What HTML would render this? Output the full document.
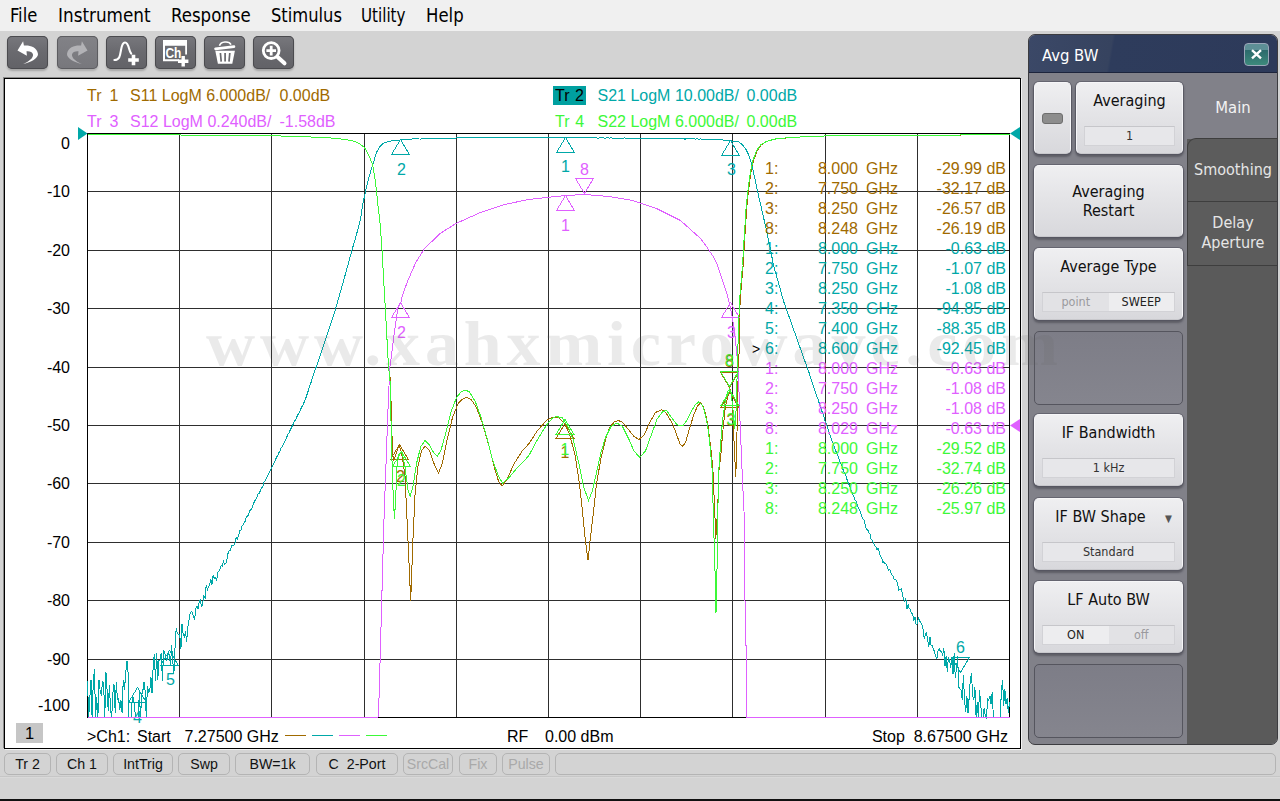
<!DOCTYPE html><html><head><meta charset="utf-8"><title>Network Analyzer</title><style>
*{box-sizing:border-box;margin:0;padding:0}
html,body{width:1280px;height:801px;overflow:hidden}
body{position:relative;background:#d3d3d3;font-family:"Liberation Sans",sans-serif;color:#000}
.abs{position:absolute}
#menubar{left:0;top:0;width:1280px;height:31px;background:#f0f0f0}
#menubar span{position:absolute;top:4px;font-size:19px;line-height:22px;transform-origin:0 0;font-family:"DejaVu Sans Condensed","Liberation Sans",sans-serif;white-space:nowrap}
.tb{position:absolute;top:36px;width:41px;height:33px;border-radius:5px;background:linear-gradient(#78787d,#69696e 50%,#626267);box-shadow:inset 0 0 0 1px #4b4b4f,0 2px 2px rgba(0,0,0,.22)}
.tb.dis{background:linear-gradient(#828287,#77777c);box-shadow:inset 0 0 0 1px #5c5c60,0 2px 2px rgba(0,0,0,.18)}
.tb svg{position:absolute;left:0;top:0}
#plot{left:4px;top:78px;width:1017px;height:671px;background:#fff;border:1px solid #000;box-shadow:-1px -1px 0 #8a8a8a,1px 1px 0 #f4f4f4}
.pt{position:absolute;font-size:16px;line-height:20px;white-space:pre}
.c1{color:#a06a00}.c2{color:#00a8a8}.c3{color:#df60ff}.c4{color:#3cf838}
.yl{position:absolute;left:20px;width:50px;text-align:right;font-size:16px;line-height:20px}
#mk{position:absolute;left:0;top:0}
.mr{position:absolute;height:20px;font-size:16px;line-height:20px;white-space:pre}
#wm{left:206px;top:303.7px;font-family:"Liberation Serif",serif;font-weight:bold;font-size:63px;line-height:80px;letter-spacing:4.5px;color:rgba(100,100,100,.135);white-space:nowrap;pointer-events:none;transform:scaleX(1.08);transform-origin:0 0}
/* side panel */
#panel{left:1028px;top:34px;width:250px;height:711px;border-radius:7px;background:#818189;border:1px solid #3c3c40;overflow:hidden}
#ptitle{left:0;top:0;width:248px;height:38px;background:linear-gradient(100deg,#3b4867 0%,#36435f 33%,#2e3c5c 34%,#2d3a5a 100%);border-bottom:1px solid #1c243c;border-radius:6px 6px 0 0;color:#fff;font-family:"DejaVu Sans Condensed","Liberation Sans",sans-serif;font-size:16.5px;line-height:41px;padding-left:13px}
#pclose{left:215px;top:8px;width:25px;height:23px;border-radius:4px;border:1px solid #9aa6b8;background:linear-gradient(#5d8f96 0%,#5d8f96 28%,#2c6a6c 30%,#3d8a7c 100%)}
#tabs{left:158px;top:38px;width:92px;height:673px;background:#5a5a5a}
.tab{position:absolute;left:0;width:92px;color:#e6e6e6;font-family:"DejaVu Sans Condensed","Liberation Sans",sans-serif;font-size:16px;line-height:20px;text-align:center}
.kb{position:absolute;left:5px;width:149px;height:72px;border-radius:5px;background:linear-gradient(#efeff1,#e4e4e7 45%,#d8d8dc);border:1px solid #f6f6f8;border-bottom-color:#c8c8cc;box-shadow:0 0 0 1px rgba(80,80,92,.55),0 2px 2px 1px rgba(40,40,50,.4);font-family:"DejaVu Sans Condensed","Liberation Sans",sans-serif;font-size:16px;line-height:19px;text-align:center;color:#111}
.kb .t{position:absolute;left:0;width:100%;top:8px}
.kb .v{position:absolute;left:7px;right:7px;top:43px;height:20px;border:1px solid #d2d2d6;border-top-color:#c6c6ca;background:#e7e7ea;font-size:12.5px;line-height:18px;color:#333}
.kb .v i{font-style:normal;position:absolute;top:0;width:50%;text-align:center}
.kb .v .on{background:#ededef;color:#222}
.kb .v .off{color:#9a9a9e;background:#e2e2e5}
.ke{position:absolute;left:5px;width:149px;height:74px;border-radius:5px;border:1px solid #55555e;background:linear-gradient(#7d7d87,#85858e)}
/* status bar */
.sb{position:absolute;top:753px;height:22px;border:1px solid #b4b4b4;border-radius:5px;background:#d3d3d3;font-size:14.2px;line-height:20px;text-align:center;color:#111;white-space:pre}
.sb.dis{color:#a9a9a9}
#sline{left:0;top:776px;width:1280px;height:2px;background:linear-gradient(#bdbdbd,#e2e2e2)}
#bline{left:0;top:799px;width:1280px;height:2px;background:#111}
</style></head><body>
<div id="menubar" class="abs">
<span style="left:9.6px;transform:scaleX(0.96)">File</span>
<span style="left:58.3px;transform:scaleX(0.985)">Instrument</span>
<span style="left:170.5px;transform:scaleX(0.972)">Response</span>
<span style="left:270.5px;transform:scaleX(0.955)">Stimulus</span>
<span style="left:361px;transform:scaleX(0.885)">Utility</span>
<span style="left:426.3px;transform:scaleX(0.965)">Help</span>
</div>
<div class="tb" style="left:7px"><svg width="41" height="33" viewBox="0 0 41 33"><path d="M10.5 14.6L16.1 5.2L16.9 9.6C22 9 30 10.5 31 18C31.3 22 24 26.5 16.2 27.9C22 25.5 26.5 22 26 18.5C25.5 15.5 22 15 19.5 15.3L19.9 19.8Z" fill="#fff"/></svg></div>
<div class="tb dis" style="left:57px"><svg width="41" height="33" viewBox="0 0 41 33"><path d="M30.5 14.6L24.9 5.2L24.1 9.6C19 9 11 10.5 10 18C9.7 22 17 26.5 24.8 27.9C19 25.5 14.5 22 15 18.5C15.5 15.5 19 15 21.5 15.3L21.1 19.8Z" fill="#b2b2b6"/></svg></div>
<div class="tb" style="left:106px"><svg width="41" height="33" viewBox="0 0 41 33"><path d="M8.4 24C13.5 24 14 20 15 14C16 8 17.3 6.5 19 6.5C21.3 6.5 22.3 9.5 23.2 13C23.8 15.3 24.5 16.8 25.2 17.7" fill="none" stroke="#fff" stroke-width="2.1" stroke-linecap="round"/><path d="M22.2 24h10.6M27.5 18.7v10.6" stroke="#fff" stroke-width="3.6"/></svg></div>
<div class="tb" style="left:155px"><svg width="41" height="33" viewBox="0 0 41 33"><path d="M8 4h24v14.5h-1.8v-8.8h-20.2v13.6h14v2h-16z" fill="#fff"/><text x="10.4" y="22" font-family="Liberation Sans,sans-serif" font-weight="bold" font-size="14" fill="#fff" textLength="16" lengthAdjust="spacingAndGlyphs">Ch</text><path d="M23 25.2h10.4M28.2 20v10.4" stroke="#fff" stroke-width="3.4"/></svg></div>
<div class="tb" style="left:204px"><svg width="41" height="33" viewBox="0 0 41 33"><path d="M15.5 9.8C16.5 5.4 25 4.6 27 8.6" fill="none" stroke="#fff" stroke-width="1.6"/><path d="M11.5 12.9L30 10.6" stroke="#fff" stroke-width="2.6" stroke-linecap="round"/><path d="M11.3 14.8h19.6l-2.6 13h-14.4z" fill="#fff"/><path d="M16.4 17l.8 8.6M21.1 17v8.6M25.8 17l-.8 8.6" stroke="#68686d" stroke-width="1.7"/></svg></div>
<div class="tb" style="left:253px"><svg width="41" height="33" viewBox="0 0 41 33"><circle cx="18.2" cy="14.6" r="7.9" fill="none" stroke="#fff" stroke-width="2.8"/><path d="M13.4 14.6h9.6M18.2 9.8v9.6" stroke="#fff" stroke-width="2.8"/><path d="M24.6 21L31.5 27.3" stroke="#fff" stroke-width="4" stroke-linecap="round"/></svg></div>
<div id="plot" class="abs"></div>
<span class="pt c1" style="left:87px;top:86px">Tr</span><span class="pt c1" style="left:109.5px;top:86px">1</span><span class="pt c1" style="left:130px;top:86px">S11 LogM 6.000dB/</span><span class="pt c1" style="left:279.5px;top:86px">0.00dB</span>
<span class="pt c3" style="left:87px;top:112px">Tr</span><span class="pt c3" style="left:109.5px;top:112px">3</span><span class="pt c3" style="left:130px;top:112px">S12 LogM 0.240dB/</span><span class="pt c3" style="left:279.5px;top:112px">-1.58dB</span>
<div class="abs" style="left:553px;top:86px;width:33px;height:19px;background:#00a0a0"></div>
<span class="pt" style="left:555px;top:86px;color:#000">Tr</span><span class="pt" style="left:575px;top:86px;color:#000">2</span>
<span class="pt c2" style="left:597.5px;top:86px">S21 LogM 10.00dB/</span><span class="pt c2" style="left:746.5px;top:86px">0.00dB</span>
<span class="pt c4" style="left:555px;top:112px">Tr</span><span class="pt c4" style="left:575.3px;top:112px">4</span><span class="pt c4" style="left:597.5px;top:112px">S22 LogM 6.000dB/</span><span class="pt c4" style="left:746.5px;top:112px">0.00dB</span>
<div class="yl" style="top:134px">0</div>
<div class="yl" style="top:182px">-10</div>
<div class="yl" style="top:241px">-20</div>
<div class="yl" style="top:299px">-30</div>
<div class="yl" style="top:358px">-40</div>
<div class="yl" style="top:416px">-50</div>
<div class="yl" style="top:474px">-60</div>
<div class="yl" style="top:533px">-70</div>
<div class="yl" style="top:591px">-80</div>
<div class="yl" style="top:650px">-90</div>
<div class="yl" style="top:696px">-100</div>
<svg class="abs" style="left:0;top:0" width="1280" height="801" viewBox="0 0 1280 801">
<path d="M87.5 133V718M87 133.5H1010M179.5 133V718M87 191.5H1010M271.5 133V718M87 250.5H1010M364.5 133V718M87 308.5H1010M456.5 133V718M87 367.5H1010M548.5 133V718M87 425.5H1010M640.5 133V718M87 483.5H1010M732.5 133V718M87 542.5H1010M825.5 133V718M87 600.5H1010M917.5 133V718M87 659.5H1010M1009.5 133V718M87 717.5H1010" stroke="#2e2e2e" stroke-width="1" fill="none" shape-rendering="crispEdges"/>
<rect x="87.5" y="133.5" width="922" height="584" fill="none" stroke="#000" shape-rendering="crispEdges"/>
<g shape-rendering="crispEdges" font-family="Liberation Sans,sans-serif" font-size="16" text-anchor="middle">
<polyline points="87.5,134.5 180.5,134.5 181.5,135.5 260.5,135.5 300.5,136.5 330.5,138.0 345.5,139.5 355.5,141.5 360.5,144.5 364.5,147.5 368.5,154.5 372.5,164.5 374.5,175.5 376.5,190.5 378.0,205.5 380.0,222.5 382.0,249.5 385.3,308.5 388.5,366.5 390.5,380.5 391.5,420.5 392.5,450.5 393.5,461.0 395.5,455.5 399.2,445.1 401.5,452.5 405.0,475.5 407.9,538.5 410.7,600.5 413.0,538.5 415.0,495.5 417.9,466.5 421.5,450.9 425.1,446.0 429.5,450.5 433.5,462.5 438.5,473.0 442.3,463.5 446.5,442.3 452.5,417.5 458.1,403.5 462.5,399.2 466.5,397.5 471.1,399.5 476.5,407.5 482.5,423.5 488.3,443.5 494.1,466.5 498.5,481.1 502.1,486.0 507.0,479.5 514.2,463.5 522.5,450.5 529.1,443.5 537.5,430.5 546.5,420.5 552.1,417.3 557.9,417.3 563.5,422.2 569.4,433.5 575.1,455.2 579.5,483.9 582.3,509.5 585.2,538.5 588.0,560.1 590.3,538.5 593.8,509.5 596.5,483.9 601.0,458.1 605.3,440.5 609.5,427.9 613.9,422.2 618.2,420.5 622.5,422.2 628.3,429.4 634.0,436.5 638.9,439.5 644.1,435.1 649.8,422.2 655.5,412.5 661.3,409.8 664.0,410.5 667.5,415.2 672.7,423.9 677.1,436.2 680.5,444.9 682.9,446.3 685.8,441.5 689.3,429.2 693.7,415.2 697.2,406.5 700.4,402.9 703.3,406.5 706.3,416.9 708.5,429.2 711.2,451.9 712.9,469.5 714.5,505.5 715.8,538.5 717.8,505.5 719.0,470.5 720.8,455.5 722.5,434.5 725.2,408.2 727.8,396.0 730.5,389.8 732.2,402.5 733.9,437.9 735.7,476.5 736.7,451.5 737.5,402.5 738.3,368.0 739.2,350.5 740.1,300.5 743.1,265.5 744.8,237.5 746.6,209.5 748.3,191.9 750.9,172.5 753.5,160.5 757.1,150.8 761.4,144.7 767.5,141.2 776.1,139.0 792.1,137.4 814.7,136.3 841.1,135.5 960.1,135.5 961.1,134.5 1010.1,134.5" fill="none" stroke="#a06a00" stroke-width="1"/>
<path d="M565.0 423.5L574.0 438.5H556.0Z" fill="none" stroke="#a06a00"/><text x="565.0" y="458.0" fill="#a06a00">1</text>
<path d="M399.5 444.5L408.5 459.5H390.5Z" fill="none" stroke="#a06a00"/><text x="400.5" y="482.0" fill="#a06a00">2</text>
<path d="M730.0 392.5L739.0 407.5H721.0Z" fill="none" stroke="#a06a00"/><text x="731.0" y="426.0" fill="#a06a00">3</text>
<path d="M729.5 387.5L738.5 372.5H720.5Z" fill="none" stroke="#a06a00"/><text x="729.5" y="367.0" fill="#a06a00">8</text>
<polyline points="87.5,680.8 88.7,717.5 89.8,698.1 91.0,679.7 92.1,717.5 93.3,681.8 94.4,669.0 95.6,717.5 96.7,697.3 97.9,717.5 99.0,680.3 100.2,691.2 101.3,695.5 102.5,681.5 103.6,683.4 104.8,717.5 105.9,671.8 107.1,690.0 108.2,710.8 109.4,685.0 110.5,708.8 111.7,717.5 112.9,692.5 114.0,684.4 115.2,712.7 116.3,682.5 117.5,699.4 118.6,698.5 119.8,710.1 120.9,700.1 122.1,713.2 123.2,680.4 124.4,689.6 125.5,677.0 126.7,661.7 127.8,661.9 129.0,717.5 130.1,717.5 131.3,717.5 132.4,696.1 133.6,697.5 134.8,710.8 135.9,717.5 137.1,717.5 138.2,717.5 139.4,692.5 140.5,717.5 141.7,694.9 142.8,691.1 144.0,682.1 145.1,690.4 146.3,717.5 147.4,685.8 148.6,692.1 149.7,691.7 150.9,676.7 152.0,693.2 153.2,666.2 154.3,654.4 155.5,680.5 156.7,653.2 157.8,679.6 159.0,660.1 160.1,660.0 161.3,652.8 162.4,681.2 163.6,649.9 164.7,652.6 165.9,658.2 167.0,660.6 168.2,653.7 169.3,654.2 170.5,665.8 171.6,644.9 172.8,661.9 173.9,673.6 175.1,646.2 176.2,628.2 177.4,633.7 178.5,634.6 179.7,634.3 180.9,649.1 182.0,623.8 183.2,634.6 184.3,636.9 185.5,631.4 186.6,642.2 187.8,627.9 188.9,620.6 190.1,613.8 191.2,611.7 192.4,612.4 193.5,617.0 194.7,618.9 195.8,608.0 197.0,606.2 198.1,609.2 199.3,600.9 200.4,599.6 201.6,607.4 202.8,602.1 203.9,596.1 205.1,597.8 206.2,585.0 207.4,590.0 208.5,586.7 209.7,584.3 210.8,578.8 212.0,584.6 213.1,575.6 214.3,578.3 215.4,577.3 216.6,580.8 217.7,572.7 218.9,571.1 220.0,569.3 221.2,565.5 222.3,566.2 223.5,561.4 224.6,564.6 225.8,563.4 227.0,559.2 228.1,553.0 229.3,550.6 230.4,550.6 231.6,546.0 232.7,545.6 233.9,545.1 235.0,542.8 236.2,537.3 237.3,539.1 238.5,536.1 239.6,530.7 240.8,530.4 241.9,526.4 243.1,525.1 244.2,522.7 245.4,520.9 246.5,516.3 247.7,516.2 248.8,513.6 250.0,510.4 251.2,509.5 252.3,507.6 253.5,503.7 254.6,501.1 255.8,499.4 256.9,497.7 258.1,493.8 259.2,493.9 260.4,490.4 261.5,487.4 262.7,487.1 263.8,482.4 265.0,481.4 266.1,478.9 267.3,476.7 268.4,474.1 269.6,471.5 270.7,469.4 271.9,467.3 273.1,464.6 274.2,462.5 275.4,460.0 276.5,457.4 277.7,455.5 278.8,452.9 280.0,450.8 281.1,448.1 282.3,446.4 283.4,443.8 284.6,441.7 285.7,439.5 286.9,436.8 288.0,434.3 289.2,432.6 290.3,429.8 291.5,427.6 292.6,425.3 293.8,422.8 294.9,420.7 296.1,418.5 297.3,415.9 298.4,413.9 299.6,411.7 300.7,409.0 301.9,406.8 303.0,404.7 304.2,402.2 305.3,399.4 306.5,396.1 307.6,392.9 308.8,389.1 309.9,385.6 311.1,382.2 312.2,378.6 313.4,375.3 314.5,371.7 315.7,368.4 316.8,365.3 318.0,361.8 319.2,358.3 320.3,354.8 321.5,351.2 322.6,348.1 323.8,344.4 324.9,341.1 326.1,337.5 327.2,334.1 328.4,330.6 329.5,327.4 330.7,323.8 331.8,320.3 333.0,317.0 334.1,313.5 335.3,309.8 336.4,306.1 337.6,302.0 338.7,297.9 339.9,293.7 341.1,289.8 342.2,285.5 343.4,281.4 344.5,277.3 345.7,273.0 346.8,268.8 348.0,264.6 349.1,260.7 350.3,256.3 351.4,252.3 352.6,248.1 353.7,244.0 354.9,240.1 356.0,235.8 357.2,231.9 358.3,227.5 359.5,223.3 360.6,218.3 361.8,210.4 362.9,203.3 364.1,198.1 365.3,192.7 366.4,187.6 367.6,182.6 368.7,177.7 369.9,174.2 371.0,170.4 372.2,166.6 373.3,162.9 374.5,159.1 375.6,155.4 376.8,151.9 377.9,150.1 379.1,147.9 380.2,146.2 381.4,144.9 382.5,144.0 383.7,143.0 384.8,142.5 386.0,142.3 387.1,141.8 388.3,141.5 389.5,141.1 390.6,141.1 391.8,140.8 392.9,140.5 394.1,140.8 395.2,140.4 396.4,140.4 397.5,140.3 398.7,140.1 399.8,140.1 401.0,139.8 402.1,139.7 403.3,139.8 404.4,139.6 405.6,139.7 406.7,139.5 407.9,139.3 409.0,139.3 410.2,139.1 411.4,139.1 412.5,138.9 413.7,138.8 414.8,138.8 416.0,139.0 417.1,138.9 418.3,138.8 419.4,139.0 420.6,139.1 421.7,138.8 422.9,138.7 424.0,138.8 425.2,138.8 426.3,138.8 427.5,138.7 428.6,139.0 429.8,138.7 430.9,138.7 432.1,138.9 433.2,138.8 434.4,138.6 435.6,138.6 436.7,138.6 437.9,138.7 439.0,138.9 440.2,138.7 441.3,138.5 442.5,138.7 443.6,138.4 444.8,138.4 445.9,138.6 447.1,138.4 448.2,138.7 449.4,138.6 450.5,138.5 451.7,138.3 452.8,138.0 454.0,138.2 455.1,138.0 456.3,138.0 457.5,137.8 458.6,137.8 459.8,137.6 460.9,137.5 462.1,137.5 463.2,137.3 464.4,137.4 465.5,137.6 466.7,137.6 467.8,137.5 469.0,137.6 470.1,137.5 471.3,137.7 472.4,137.6 473.6,137.4 474.7,137.7 475.9,137.6 477.0,137.7 478.2,137.7 479.4,137.6 480.5,137.6 481.7,137.5 482.8,137.6 484.0,137.6 485.1,137.4 486.3,137.4 487.4,137.6 488.6,137.7 489.7,137.3 490.9,137.4 492.0,137.6 493.2,137.4 494.3,137.6 495.5,137.5 496.6,137.5 497.8,137.6 498.9,137.6 500.1,137.3 501.2,137.4 502.4,137.3 503.6,137.4 504.7,137.5 505.9,137.7 507.0,137.5 508.2,137.5 509.3,137.7 510.5,137.2 511.6,137.5 512.8,137.5 513.9,137.3 515.1,137.7 516.2,137.5 517.4,137.5 518.5,137.3 519.7,137.4 520.8,137.5 522.0,137.7 523.1,137.6 524.3,137.5 525.5,137.5 526.6,137.4 527.8,137.4 528.9,137.3 530.1,137.5 531.2,137.6 532.4,137.7 533.5,137.3 534.7,137.6 535.8,137.4 537.0,137.5 538.1,137.3 539.3,137.5 540.4,137.6 541.6,137.5 542.7,137.5 543.9,137.7 545.0,137.5 546.2,137.7 547.3,137.3 548.5,137.5 549.7,137.6 550.8,137.6 552.0,137.5 553.1,137.3 554.3,137.4 555.4,137.5 556.6,137.7 557.7,137.4 558.9,137.5 560.0,137.4 561.2,137.6 562.3,137.3 563.5,137.3 564.6,137.6 565.8,137.4 566.9,137.7 568.1,137.4 569.2,137.5 570.4,137.4 571.5,137.5 572.7,137.5 573.9,137.7 575.0,137.8 576.2,137.7 577.3,137.5 578.5,137.6 579.6,137.8 580.8,137.6 581.9,137.7 583.1,137.7 584.2,137.8 585.4,137.7 586.5,137.6 587.7,137.6 588.8,137.7 590.0,137.9 591.1,137.7 592.3,137.6 593.4,137.8 594.6,138.0 595.8,137.9 596.9,138.0 598.1,138.0 599.2,138.0 600.4,137.9 601.5,137.8 602.7,137.9 603.8,138.0 605.0,138.1 606.1,138.0 607.3,137.9 608.4,137.9 609.6,138.1 610.7,137.8 611.9,138.0 613.0,138.1 614.2,138.3 615.3,138.0 616.5,138.1 617.6,138.2 618.8,138.1 620.0,138.3 621.1,138.0 622.3,138.2 623.4,138.3 624.6,137.9 625.7,138.1 626.9,138.0 628.0,138.2 629.2,138.0 630.3,138.3 631.5,138.3 632.6,138.2 633.8,138.3 634.9,138.1 636.1,138.3 637.2,138.5 638.4,138.3 639.5,138.2 640.7,138.4 641.9,138.3 643.0,138.4 644.2,138.6 645.3,138.3 646.5,138.3 647.6,138.3 648.8,138.3 649.9,138.5 651.1,138.4 652.2,138.5 653.4,138.2 654.5,138.4 655.7,138.6 656.8,138.3 658.0,138.6 659.1,138.7 660.3,138.5 661.4,138.5 662.6,138.6 663.8,138.6 664.9,138.6 666.1,138.8 667.2,138.6 668.4,138.7 669.5,138.6 670.7,138.6 671.8,138.7 673.0,138.7 674.1,138.7 675.3,138.5 676.4,138.8 677.6,138.8 678.7,138.8 679.9,138.7 681.0,138.9 682.2,138.9 683.3,138.6 684.5,139.0 685.6,139.0 686.8,138.7 688.0,138.9 689.1,139.0 690.3,138.7 691.4,139.0 692.6,138.9 693.7,138.9 694.9,139.0 696.0,139.0 697.2,138.9 698.3,139.1 699.5,139.2 700.6,138.9 701.8,139.1 702.9,139.1 704.1,139.0 705.2,139.2 706.4,139.3 707.5,139.4 708.7,139.2 709.9,139.1 711.0,139.3 712.2,139.3 713.3,139.4 714.5,139.4 715.6,139.1 716.8,139.2 717.9,139.4 719.1,139.4 720.2,139.7 721.4,139.5 722.5,139.7 723.7,140.1 724.8,140.2 726.0,140.3 727.1,140.3 728.3,140.5 729.4,140.8 730.6,140.9 731.7,141.0 732.9,141.1 734.1,141.4 735.2,141.3 736.4,141.2 737.5,141.3 738.7,141.7 739.8,142.9 741.0,143.4 742.1,144.5 743.3,145.9 744.4,147.3 745.6,148.6 746.7,150.9 747.9,153.2 749.0,156.0 750.2,159.1 751.3,162.9 752.5,167.5 753.6,173.1 754.8,178.3 756.0,183.9 757.1,189.3 758.3,194.4 759.4,199.3 760.6,204.5 761.7,209.5 762.9,214.5 764.0,219.4 765.2,224.4 766.3,229.7 767.5,234.9 768.6,240.6 769.8,246.1 770.9,251.8 772.1,258.0 773.2,264.1 774.4,268.4 775.5,272.5 776.7,276.5 777.8,280.7 779.0,285.0 780.2,289.0 781.3,293.0 782.5,297.6 783.6,301.4 784.8,304.8 785.9,307.7 787.1,311.3 788.2,314.3 789.4,317.6 790.5,320.9 791.7,323.8 792.8,327.5 794.0,330.6 795.1,333.6 796.3,336.8 797.4,340.4 798.6,343.6 799.7,346.8 800.9,349.8 802.0,353.3 803.2,356.3 804.4,359.7 805.5,362.8 806.7,366.2 807.8,369.5 809.0,372.4 810.1,376.3 811.3,379.6 812.4,383.2 813.6,386.6 814.7,390.5 815.9,393.3 817.0,396.6 818.2,399.7 819.3,403.4 820.5,406.5 821.6,410.4 822.8,413.5 823.9,416.8 825.1,421.3 826.3,423.6 827.4,427.9 828.6,430.6 829.7,434.6 830.9,437.2 832.0,441.0 833.2,443.5 834.3,446.8 835.5,450.2 836.6,452.9 837.8,455.4 838.9,458.9 840.1,462.1 841.2,464.6 842.4,467.1 843.5,471.5 844.7,473.3 845.8,475.6 847.0,479.4 848.1,482.2 849.3,485.2 850.5,488.8 851.6,491.2 852.8,494.8 853.9,496.9 855.1,500.6 856.2,501.3 857.4,505.9 858.5,508.4 859.7,510.3 860.8,513.6 862.0,517.2 863.1,519.4 864.3,520.5 865.4,525.8 866.6,529.4 867.7,529.7 868.9,532.9 870.0,533.6 871.2,539.8 872.4,540.1 873.5,543.2 874.7,545.8 875.8,546.2 877.0,549.8 878.1,548.0 879.3,552.2 880.4,556.6 881.6,557.2 882.7,562.5 883.9,561.6 885.0,563.4 886.2,564.3 887.3,566.5 888.5,570.6 889.6,569.5 890.8,572.1 891.9,575.1 893.1,576.0 894.2,579.3 895.4,579.3 896.6,580.3 897.7,585.0 898.9,590.1 900.0,589.5 901.2,589.0 902.3,593.4 903.5,599.4 904.6,600.8 905.8,597.7 906.9,609.0 908.1,604.8 909.2,608.6 910.4,609.5 911.5,613.9 912.7,613.6 913.8,621.0 915.0,616.8 916.1,624.3 917.3,623.9 918.5,616.8 919.6,620.9 920.8,622.9 921.9,624.8 923.1,629.7 924.2,639.0 925.4,634.1 926.5,632.8 927.7,639.6 928.8,647.4 930.0,636.9 931.1,645.8 932.3,645.2 933.4,649.2 934.6,651.9 935.7,656.8 936.9,658.4 938.0,651.4 939.2,649.0 940.4,651.3 941.5,651.7 942.7,655.6 943.8,648.0 945.0,665.7 946.1,656.2 947.3,671.7 948.4,657.2 949.6,660.3 950.7,668.0 951.9,656.8 953.0,674.3 954.2,653.0 955.3,678.4 956.5,668.0 957.6,656.5 958.8,687.1 959.9,689.0 961.1,690.3 962.2,700.1 963.4,675.0 964.6,701.4 965.7,711.9 966.9,695.7 968.0,713.4 969.2,697.1 970.3,679.7 971.5,673.4 972.6,695.2 973.8,700.0 974.9,687.3 976.1,716.6 977.2,702.2 978.4,717.5 979.5,690.5 980.7,704.4 981.8,717.5 983.0,717.5 984.1,708.5 985.3,715.2 986.5,717.5 987.6,698.6 988.8,700.1 989.9,695.8 991.1,704.3 992.2,692.3 993.4,717.5 994.5,717.5 995.7,717.5 996.8,717.5 998.0,717.4 999.1,717.5 1000.3,717.5 1001.4,689.7 1002.6,679.9 1003.7,705.5 1004.9,689.4 1006.0,704.2 1007.2,698.5 1008.3,713.0 1009.5,702.1" fill="none" stroke="#00a8a8" stroke-width="1"/>
<path d="M565.5 137.5L574.5 152.5H556.5Z" fill="none" stroke="#00a8a8"/><text x="565.5" y="172.0" fill="#00a8a8">1</text>
<path d="M400.5 139.5L409.5 154.5H391.5Z" fill="none" stroke="#00a8a8"/><text x="401.5" y="175.0" fill="#00a8a8">2</text>
<path d="M730.5 140.5L739.5 155.5H721.5Z" fill="none" stroke="#00a8a8"/><text x="731.5" y="175.0" fill="#00a8a8">3</text>
<path d="M137.5 687.5L146.5 702.5H128.5Z" fill="none" stroke="#00a8a8"/><text x="137.5" y="722.5" fill="#00a8a8">4</text>
<path d="M169.5 650.5L178.5 665.5H160.5Z" fill="none" stroke="#00a8a8"/><text x="170.5" y="685.0" fill="#00a8a8">5</text>
<path d="M960.5 672.5L969.5 657.5H951.5Z" fill="none" stroke="#00a8a8"/><text x="960.5" y="653.0" fill="#00a8a8">6</text>
<polyline points="87.5,717.5 377.5,717.5 378.5,716.5 381.0,627.5 383.8,525.5 386.5,450.5 388.5,395.5 390.0,366.5 393.3,340.5 397.8,308.5 401.0,302.5 402.3,295.5 407.9,280.5 415.8,262.5 424.5,248.5 440.5,233.2 456.5,223.2 480.5,212.5 504.5,204.5 528.5,199.5 552.5,196.8 566.5,195.5 584.5,194.5 608.5,196.5 632.5,200.5 656.5,208.5 680.5,220.5 700.5,238.5 707.5,247.9 714.5,258.5 717.5,265.5 722.5,280.5 726.5,292.5 729.5,303.5 732.5,318.5 735.0,335.5 737.0,355.5 738.3,371.5 740.0,420.5 741.8,464.1 743.0,490.5 744.0,510.5 744.5,570.5 745.0,600.5 746.1,649.5 747.0,717.5 1009.5,717.5" fill="none" stroke="#df60ff" stroke-width="1"/>
<path d="M565.5 195.5L574.5 210.5H556.5Z" fill="none" stroke="#df60ff"/><text x="565.5" y="231.0" fill="#df60ff">1</text>
<path d="M400.5 302.5L409.5 317.5H391.5Z" fill="none" stroke="#df60ff"/><text x="401.5" y="338.0" fill="#df60ff">2</text>
<path d="M730.5 302.5L739.5 317.5H721.5Z" fill="none" stroke="#df60ff"/><text x="731.5" y="338.0" fill="#df60ff">3</text>
<path d="M584.5 193.5L593.5 178.5H575.5Z" fill="none" stroke="#df60ff"/><text x="584.5" y="175.0" fill="#df60ff">8</text>
<polyline points="87.5,134.5 180.5,134.5 181.5,135.5 260.5,135.5 300.5,136.5 330.5,138.0 345.5,139.5 355.5,141.5 360.5,144.5 364.5,147.5 368.5,154.5 372.5,164.5 374.5,175.5 376.5,190.5 378.0,205.5 380.0,222.5 382.0,249.5 385.3,308.5 388.5,366.5 390.0,380.5 392.0,460.5 393.5,504.0 394.5,518.5 395.8,495.5 396.9,466.5 399.2,453.5 402.1,452.5 405.0,466.5 407.9,489.5 410.2,496.0 413.0,486.5 416.5,463.5 420.8,446.5 425.1,440.5 429.5,445.2 433.5,452.5 437.2,456.1 440.9,450.5 445.2,435.1 451.0,412.1 456.5,397.5 461.0,392.0 465.3,390.0 469.5,392.0 475.5,402.0 481.1,417.5 486.9,438.0 492.5,459.5 498.5,476.5 502.5,483.1 508.5,478.2 517.0,468.1 525.5,459.5 529.1,455.2 537.5,439.5 546.5,425.0 552.1,418.5 556.5,416.5 562.2,417.9 567.9,426.5 573.5,440.5 579.5,466.5 583.5,486.5 588.5,500.5 592.3,491.1 596.5,472.5 601.0,452.3 605.3,438.0 611.0,426.5 616.8,423.0 622.5,426.5 628.3,438.0 634.0,450.9 639.8,457.5 645.5,450.9 651.2,435.1 657.0,419.3 662.7,411.5 666.5,410.5 671.0,416.9 676.2,423.9 679.7,426.0 683.2,425.5 686.7,420.5 691.1,411.5 695.5,404.5 699.0,401.7 702.5,405.5 705.5,415.2 708.1,429.2 710.3,448.5 712.1,469.5 713.5,520.5 715.0,570.5 716.0,612.5 717.0,570.5 717.5,520.5 719.1,464.1 720.8,441.5 722.5,420.5 725.2,401.2 727.8,391.5 729.5,389.0 731.3,394.2 733.0,409.9 734.8,429.2 736.0,411.5 737.1,376.5 737.8,350.5 739.5,300.5 742.5,265.5 744.2,237.5 746.0,209.5 747.7,191.9 750.3,172.5 752.9,160.5 756.5,150.8 760.8,144.7 766.9,141.2 775.5,139.0 791.5,137.4 814.1,136.3 840.5,135.5 959.5,135.5 960.5,134.5 1009.5,134.5" fill="none" stroke="#3cf838" stroke-width="1"/>
<path d="M565.0 419.5L574.0 434.5H556.0Z" fill="none" stroke="#3cf838"/><text x="565.0" y="455.0" fill="#3cf838">1</text>
<path d="M401.5 451.5L410.5 466.5H392.5Z" fill="none" stroke="#3cf838"/><text x="401.5" y="486.0" fill="#3cf838">2</text>
<path d="M730.0 390.5L739.0 405.5H721.0Z" fill="none" stroke="#3cf838"/><text x="731.0" y="425.0" fill="#3cf838">3</text>
<path d="M729.5 386.5L738.5 371.5H720.5Z" fill="none" stroke="#3cf838"/><text x="729.5" y="366.0" fill="#3cf838">8</text>
</g>
<path d="M78 127L87.5 133.5L78 140Z" fill="#00a8a8"/>
<path d="M1020 127L1010 133.5L1020 140Z" fill="#00a8a8"/>
<path d="M1020 419L1010 425.5L1020 432Z" fill="#df60ff"/>
<path d="M285 735.5h21" stroke="#a06a00" stroke-width="1.6" shape-rendering="crispEdges"/>
<path d="M312 735.5h21" stroke="#00a8a8" stroke-width="1.6" shape-rendering="crispEdges"/>
<path d="M339 735.5h21" stroke="#df60ff" stroke-width="1.6" shape-rendering="crispEdges"/>
<path d="M366 735.5h21" stroke="#3cf838" stroke-width="1.6" shape-rendering="crispEdges"/>
</svg>
<span class="mr c1" style="left:765px;top:159px">1:</span>
<span class="mr c1" style="left:780px;width:78px;text-align:right;top:159px">8.000</span>
<span class="mr c1" style="left:866px;top:159px">GHz</span>
<span class="mr c1" style="left:906px;width:100px;text-align:right;top:159px">-29.99 dB</span>
<span class="mr c1" style="left:765px;top:179px">2:</span>
<span class="mr c1" style="left:780px;width:78px;text-align:right;top:179px">7.750</span>
<span class="mr c1" style="left:866px;top:179px">GHz</span>
<span class="mr c1" style="left:906px;width:100px;text-align:right;top:179px">-32.17 dB</span>
<span class="mr c1" style="left:765px;top:199px">3:</span>
<span class="mr c1" style="left:780px;width:78px;text-align:right;top:199px">8.250</span>
<span class="mr c1" style="left:866px;top:199px">GHz</span>
<span class="mr c1" style="left:906px;width:100px;text-align:right;top:199px">-26.57 dB</span>
<span class="mr c1" style="left:765px;top:219px">8:</span>
<span class="mr c1" style="left:780px;width:78px;text-align:right;top:219px">8.248</span>
<span class="mr c1" style="left:866px;top:219px">GHz</span>
<span class="mr c1" style="left:906px;width:100px;text-align:right;top:219px">-26.19 dB</span>
<span class="mr c2" style="left:765px;top:239px">1:</span>
<span class="mr c2" style="left:780px;width:78px;text-align:right;top:239px">8.000</span>
<span class="mr c2" style="left:866px;top:239px">GHz</span>
<span class="mr c2" style="left:906px;width:100px;text-align:right;top:239px">-0.63 dB</span>
<span class="mr c2" style="left:765px;top:259px">2:</span>
<span class="mr c2" style="left:780px;width:78px;text-align:right;top:259px">7.750</span>
<span class="mr c2" style="left:866px;top:259px">GHz</span>
<span class="mr c2" style="left:906px;width:100px;text-align:right;top:259px">-1.07 dB</span>
<span class="mr c2" style="left:765px;top:279px">3:</span>
<span class="mr c2" style="left:780px;width:78px;text-align:right;top:279px">8.250</span>
<span class="mr c2" style="left:866px;top:279px">GHz</span>
<span class="mr c2" style="left:906px;width:100px;text-align:right;top:279px">-1.08 dB</span>
<span class="mr c2" style="left:765px;top:299px">4:</span>
<span class="mr c2" style="left:780px;width:78px;text-align:right;top:299px">7.350</span>
<span class="mr c2" style="left:866px;top:299px">GHz</span>
<span class="mr c2" style="left:906px;width:100px;text-align:right;top:299px">-94.85 dB</span>
<span class="mr c2" style="left:765px;top:319px">5:</span>
<span class="mr c2" style="left:780px;width:78px;text-align:right;top:319px">7.400</span>
<span class="mr c2" style="left:866px;top:319px">GHz</span>
<span class="mr c2" style="left:906px;width:100px;text-align:right;top:319px">-88.35 dB</span>
<span class="mr" style="left:752px;top:339px;color:#000;font-size:14px">&gt;</span>
<span class="mr c2" style="left:765px;top:339px">6:</span>
<span class="mr c2" style="left:780px;width:78px;text-align:right;top:339px">8.600</span>
<span class="mr c2" style="left:866px;top:339px">GHz</span>
<span class="mr c2" style="left:906px;width:100px;text-align:right;top:339px">-92.45 dB</span>
<span class="mr c3" style="left:765px;top:359px">1:</span>
<span class="mr c3" style="left:780px;width:78px;text-align:right;top:359px">8.000</span>
<span class="mr c3" style="left:866px;top:359px">GHz</span>
<span class="mr c3" style="left:906px;width:100px;text-align:right;top:359px">-0.63 dB</span>
<span class="mr c3" style="left:765px;top:379px">2:</span>
<span class="mr c3" style="left:780px;width:78px;text-align:right;top:379px">7.750</span>
<span class="mr c3" style="left:866px;top:379px">GHz</span>
<span class="mr c3" style="left:906px;width:100px;text-align:right;top:379px">-1.08 dB</span>
<span class="mr c3" style="left:765px;top:399px">3:</span>
<span class="mr c3" style="left:780px;width:78px;text-align:right;top:399px">8.250</span>
<span class="mr c3" style="left:866px;top:399px">GHz</span>
<span class="mr c3" style="left:906px;width:100px;text-align:right;top:399px">-1.08 dB</span>
<span class="mr c3" style="left:765px;top:419px">8:</span>
<span class="mr c3" style="left:780px;width:78px;text-align:right;top:419px">8.029</span>
<span class="mr c3" style="left:866px;top:419px">GHz</span>
<span class="mr c3" style="left:906px;width:100px;text-align:right;top:419px">-0.63 dB</span>
<span class="mr c4" style="left:765px;top:439px">1:</span>
<span class="mr c4" style="left:780px;width:78px;text-align:right;top:439px">8.000</span>
<span class="mr c4" style="left:866px;top:439px">GHz</span>
<span class="mr c4" style="left:906px;width:100px;text-align:right;top:439px">-29.52 dB</span>
<span class="mr c4" style="left:765px;top:459px">2:</span>
<span class="mr c4" style="left:780px;width:78px;text-align:right;top:459px">7.750</span>
<span class="mr c4" style="left:866px;top:459px">GHz</span>
<span class="mr c4" style="left:906px;width:100px;text-align:right;top:459px">-32.74 dB</span>
<span class="mr c4" style="left:765px;top:479px">3:</span>
<span class="mr c4" style="left:780px;width:78px;text-align:right;top:479px">8.250</span>
<span class="mr c4" style="left:866px;top:479px">GHz</span>
<span class="mr c4" style="left:906px;width:100px;text-align:right;top:479px">-26.26 dB</span>
<span class="mr c4" style="left:765px;top:499px">8:</span>
<span class="mr c4" style="left:780px;width:78px;text-align:right;top:499px">8.248</span>
<span class="mr c4" style="left:866px;top:499px">GHz</span>
<span class="mr c4" style="left:906px;width:100px;text-align:right;top:499px">-25.97 dB</span>
<div class="abs" style="left:16px;top:723px;width:27px;height:20px;background:#c6c6c6;font-size:16.5px;line-height:20px;text-align:center">1</div>
<span class="pt" style="left:87px;top:727px">&gt;Ch1:</span><span class="pt" style="left:137px;top:727px">Start</span><span class="pt" style="left:184.5px;top:727px">7.27500 GHz</span>
<span class="pt" style="left:507px;top:727px">RF</span><span class="pt" style="left:545px;top:727px">0.00 dBm</span>
<span class="pt" style="left:808px;width:200px;text-align:right;top:727px">Stop  8.67500 GHz</span>
<div id="panel" class="abs">
<div id="tabs" class="abs"></div>
<div class="abs" style="left:158px;top:38px;width:92px;height:66px;background:#818189"></div>
<div class="abs" style="left:158px;top:103px;width:92px;height:64px;background:#5c5c5c;border:1px solid #3e3e3e;border-right:none;border-radius:9px 0 0 0"></div>
<div class="abs" style="left:158px;top:166px;width:92px;height:65px;background:#5c5c5c;border:1px solid #3e3e3e;border-right:none"></div>
<div class="tab" style="left:158px;top:63px;color:#f2f2f2;font-size:16.5px">Main</div>
<div class="tab" style="left:158px;top:125px">Smoothing</div>
<div class="tab" style="left:158px;top:178px">Delay<br>Aperture</div>
<div id="ptitle" class="abs">Avg BW</div>
<div id="pclose" class="abs"><svg width="23" height="21" viewBox="0 0 23 21"><path d="M7 6.2l9 8.2M16 6.2l-9 8.2" stroke="#fff" stroke-width="2.4"/></svg></div>
<div class="kb" style="top:47px;width:37px"><div class="abs" style="left:7px;top:30px;width:21px;height:11px;border-radius:3px;background:#8d8d8d;border:1px solid #6e6e6e"></div></div>
<div class="kb" style="top:47px;left:47px;width:107px"><div class="t">Averaging</div><div class="v">1</div></div>
<div class="kb" style="top:130px"><div class="t" style="top:16px">Averaging<br>Restart</div></div>
<div class="kb" style="top:213px"><div class="t">Average Type</div><div class="v"><i class="off" style="left:0">point</i><i class="on" style="left:50%">SWEEP</i></div></div>
<div class="ke" style="top:296px"></div>
<div class="kb" style="top:379px"><div class="t">IF Bandwidth</div><div class="v">1 kHz</div></div>
<div class="kb" style="top:463px"><div class="t" style="left:-8px">IF BW Shape</div><div class="abs" style="left:130px;top:10px;font-size:10px;color:#555">&#9660;</div><div class="v">Standard</div></div>
<div class="kb" style="top:546px"><div class="t">LF Auto BW</div><div class="v"><i class="on" style="left:0">ON</i><i class="off" style="left:50%">off</i></div></div>
<div class="ke" style="top:629px;height:74px"></div>
</div>
<div id="wm" class="abs">www.xahxmicrowave.com</div>
<div class="sb" style="left:4px;width:47px">Tr 2</div>
<div class="sb" style="left:56px;width:52px">Ch 1</div>
<div class="sb" style="left:113px;width:60px">IntTrig</div>
<div class="sb" style="left:178px;width:52px">Swp</div>
<div class="sb" style="left:235px;width:75px">BW=1k</div>
<div class="sb" style="left:316px;width:82px">C  2-Port</div>
<div class="sb dis" style="left:403px;width:50px">SrcCal</div>
<div class="sb dis" style="left:459px;width:38px">Fix</div>
<div class="sb dis" style="left:502px;width:48px">Pulse</div>
<div class="sb" style="left:555px;width:721px"></div>
<div id="sline" class="abs"></div><div id="bline" class="abs"></div>
</body></html>
